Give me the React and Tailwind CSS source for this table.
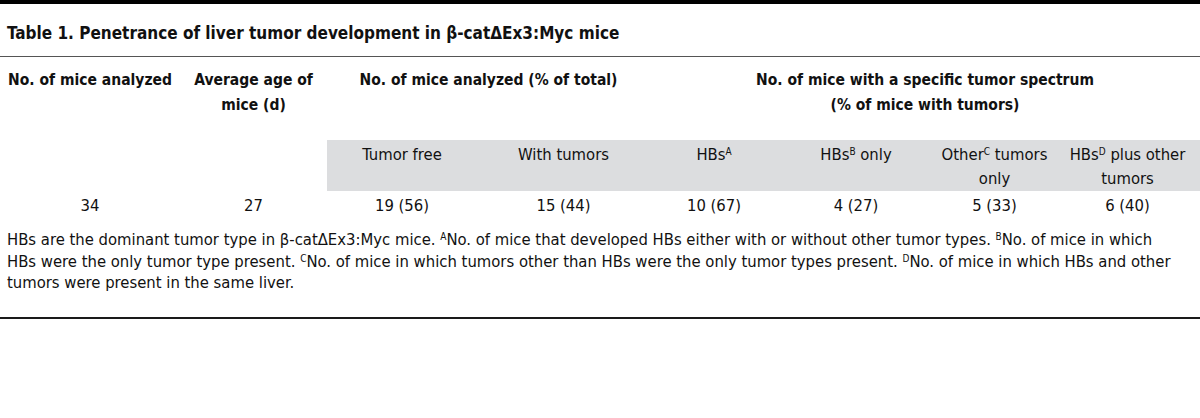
import React from "react";

const font = { fontFamily: '"DejaVu Sans Condensed", Roboto, sans-serif' };

function Sup({ children }) {
  return <sup className="text-[10px] font-normal">{children}</sup>;
}

const subHeads = [
  ["Tumor free"],
  ["With tumors"],
  [<>HBs<Sup>A</Sup></>],
  [<>HBs<Sup>B</Sup> only</>],
  [<>Other<Sup>C</Sup> tumors</>, "only"],
  [<>HBs<Sup>D</Sup> plus other</>, "tumors"],
];

const values = ["34", "27", "19 (56)", "15 (44)", "10 (67)", "4 (27)", "5 (33)", "6 (40)"];

export default function App() {
  return (
    <div className="w-[1200px] h-[418px] bg-white text-[#111]" style={font}>
      <div className="h-[4px] bg-black" />
      <h2 className="px-[7px] pt-[19px] pb-[13px] text-[17px] font-bold leading-[20px]">
        Table 1. Penetrance of liver tumor development in β-catΔEx3:Myc mice
      </h2>
      <div className="h-px bg-[#555]" />

      <div className="grid grid-cols-[180px_147px_150px_173px_128px_156px_121px_145px] text-center">
        {/* header row */}
        <div className="pt-[11px] text-[15.5px] font-bold leading-[25px]">No. of mice analyzed</div>
        <div className="pt-[11px] text-[15.5px] font-bold leading-[25px]">
          Average age of
          <br />
          mice (d)
        </div>
        <div className="col-span-2 pt-[11px] text-[15.5px] font-bold leading-[25px]">
          No. of mice analyzed (% of total)
        </div>
        <div className="col-span-4 pt-[11px] pb-[22px] text-[15.5px] font-bold leading-[25px]">
          No. of mice with a specific tumor spectrum
          <br />
          (% of mice with tumors)
        </div>

        {/* sub-header row */}
        <div />
        <div />
        {subHeads.map((lines, i) => (
          <div
            key={i}
            className="bg-[#dcdddf] pt-[3px] h-[51px] text-[16.5px] leading-[24px] whitespace-nowrap"
          >
            {lines.map((l, j) => (
              <div key={j}>{l}</div>
            ))}
          </div>
        ))}

        {/* data row */}
        {values.map((v) => (
          <div key={v} className="pt-[3px] text-[16.5px] leading-[24px]">
            {v}
          </div>
        ))}
      </div>

      <p className="px-[7px] pt-[11px] pb-[23px] text-[16.5px] leading-[21.5px] whitespace-nowrap">
        HBs are the dominant tumor type in β-catΔEx3:Myc mice. <Sup>A</Sup>No. of mice that developed HBs either
        with or without other tumor types. <Sup>B</Sup>No. of mice in which
        <br />
        HBs were the only tumor type present. <Sup>C</Sup>No. of mice in which tumors other than HBs were the only
        tumor types present. <Sup>D</Sup>No. of mice in which HBs and other
        <br />
        tumors were present in the same liver.
      </p>
      <div className="h-[2px] bg-[#1a1a1a]" />
    </div>
  );
}
